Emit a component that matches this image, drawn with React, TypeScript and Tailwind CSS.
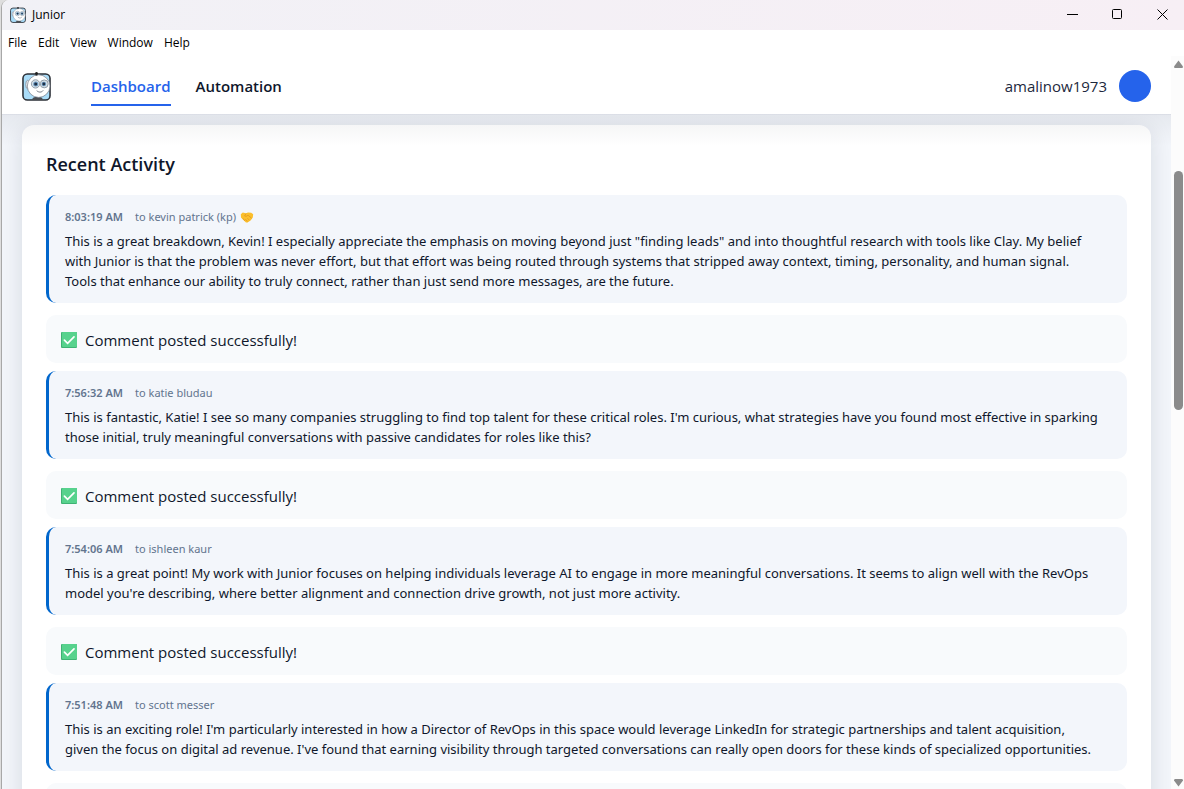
type Activity = {
  time: string;
  recipient: string;
  handshake?: boolean;
  message: string;
};

const menuItems = ["File", "Edit", "View", "Window", "Help"];

const activities: Activity[] = [
  {
    time: "8:03:19 AM",
    recipient: "to kevin patrick (kp)",
    handshake: true,
    message:
      'This is a great breakdown, Kevin! I especially appreciate the emphasis on moving beyond just "finding leads" and into thoughtful research with tools like Clay. My belief with Junior is that the problem was never effort, but that effort was being routed through systems that stripped away context, timing, personality, and human signal. Tools that enhance our ability to truly connect, rather than just send more messages, are the future.',
  },
  {
    time: "7:56:32 AM",
    recipient: "to katie bludau",
    message:
      "This is fantastic, Katie! I see so many companies struggling to find top talent for these critical roles. I'm curious, what strategies have you found most effective in sparking those initial, truly meaningful conversations with passive candidates for roles like this?",
  },
  {
    time: "7:54:06 AM",
    recipient: "to ishleen kaur",
    message:
      "This is a great point! My work with Junior focuses on helping individuals leverage AI to engage in more meaningful conversations. It seems to align well with the RevOps model you're describing, where better alignment and connection drive growth, not just more activity.",
  },
  {
    time: "7:51:48 AM",
    recipient: "to scott messer",
    message:
      "This is an exciting role! I'm particularly interested in how a Director of RevOps in this space would leverage LinkedIn for strategic partnerships and talent acquisition, given the focus on digital ad revenue. I've found that earning visibility through targeted conversations can really open doors for these kinds of specialized opportunities.",
  },
];

function RobotLogo({ className }: { className: string }) {
  return (
    <svg viewBox="0 0 30 30" className={className} aria-hidden="true">
      <rect x="1" y="2" width="28" height="27" rx="4.5" fill="#a9dcf8" stroke="#2b2f36" strokeWidth="1.6" />
      <path d="M10.5 29c0-2.4 2-3.4 5.5-3.4s5.5 1 5.5 3.4z" fill="#4a4d52" />
      <ellipse cx="5.8" cy="13" rx="1.9" ry="4.4" fill="#eef2f5" stroke="#6b7280" strokeWidth="0.7" />
      <circle cx="17.2" cy="14.6" r="11.7" fill="#ffffff" stroke="#6b7280" strokeWidth="0.7" />
      <path d="M15 3.5V1.2" stroke="#222" strokeWidth="1.8" />
      <circle cx="15" cy="1.4" r="1.4" fill="#222" />
      <circle cx="14" cy="12.3" r="4.3" fill="#d5dfe6" stroke="#8794a0" strokeWidth="0.9" />
      <circle cx="23" cy="12.3" r="4.1" fill="#d5dfe6" stroke="#8794a0" strokeWidth="0.9" />
      <circle cx="14.2" cy="12.4" r="2.6" fill="#6d9cc4" />
      <circle cx="22.6" cy="12.4" r="2.4" fill="#6d9cc4" />
      <circle cx="14.2" cy="12.4" r="1.6" fill="#1f2f45" />
      <circle cx="22.6" cy="12.4" r="1.5" fill="#1f2f45" />
      <path d="M15.5 19.6c2 1.7 4.6 1.7 6.2-0.2" fill="none" stroke="#4b5563" strokeWidth="0.8" strokeLinecap="round" />
    </svg>
  );
}

function HandshakeIcon() {
  return (
    <svg viewBox="0 0 14 12" className="h-3 w-3.5" aria-hidden="true">
      <path d="M0.8 3.2 2.8 1.6 6 2.2 8 1.6l3.2 0.2 2 1.4-0.4 3.4-2 2.6-3.2 2.2H6L2.8 8.6 1 6.4z" fill="#fbbf2d" />
      <path d="M6 2.6 4.6 5l1.6 0.4L8 4.2l3.6 3M5 10l-2-2.6M7.4 10.4 5.4 8.2M9.4 9.2 7.4 7.2" fill="none" stroke="#e09420" strokeWidth="0.7" />
    </svg>
  );
}

function CheckIcon() {
  return (
    <svg viewBox="0 0 16 16" className="size-4" aria-hidden="true">
      <rect width="16" height="16" rx="1" fill="#3fb274" />
      <rect x="1" y="0" width="15" height="15" rx="1" fill="#57d28d" />
      <path d="m3.4 8.2 3.2 3.2 6.4-6.6" fill="none" stroke="#fff" strokeWidth="1.7" strokeLinecap="round" />
    </svg>
  );
}

function TitleBar() {
  return (
    <div className="flex h-[30px] shrink-0 items-center justify-between bg-linear-to-r from-[#f1f1f6] to-[#f7eff5] pl-2">
      <div className="flex items-center gap-1.5">
        <RobotLogo className="size-4" />
        <span className="text-xs text-black">Junior</span>
      </div>
      <div className="flex h-full pb-0.5">
        <button type="button" aria-label="Minimize" className="flex w-[45px] items-center justify-center">
          <svg viewBox="0 0 11 11" className="size-[11px]" fill="none" stroke="#000">
            <path d="M0 5.5h11" />
          </svg>
        </button>
        <button type="button" aria-label="Maximize" className="flex w-[45px] items-center justify-center">
          <svg viewBox="0 0 11 11" className="size-[11px]" fill="none" stroke="#000">
            <rect x="0.5" y="0.5" width="9" height="9" rx="1" />
          </svg>
        </button>
        <button type="button" aria-label="Close" className="flex w-11 items-center justify-center">
          <svg viewBox="0 0 11 11" className="size-[11px]" fill="none" stroke="#000">
            <path d="m0.5 0.5 10 10M10.5 0.5l-10 10" />
          </svg>
        </button>
      </div>
    </div>
  );
}

function MenuBar() {
  return (
    <div className="flex h-[26px] shrink-0 items-center gap-[11px] bg-white px-1.5">
      {menuItems.map((item) => (
        <button key={item} type="button" className="text-xs text-black">
          {item}
        </button>
      ))}
    </div>
  );
}

function Header() {
  return (
    <header className="relative z-10 flex h-[59px] shrink-0 items-center justify-between border-b border-[#e8ebf2] bg-white px-5 pt-0.5">
      <div className="flex items-center gap-10">
        <RobotLogo className="size-[29px]" />
        <nav className="flex gap-[25px] text-[15px] leading-6 font-semibold">
          <a href="#dashboard" className="border-b-2 border-[#2563eb] pt-2 pb-1.5 text-[#2563eb]">
            Dashboard
          </a>
          <a href="#automation" className="border-b-2 border-transparent pt-2 pb-1.5 text-slate-900">
            Automation
          </a>
        </nav>
      </div>
      <div className="flex items-center gap-3">
        <span className="text-[15px] text-slate-800">amalinow1973</span>
        <div className="size-8 rounded-full bg-[#2563eb]" />
      </div>
      {/* Shade that the header casts on the scrolled content */}
      <div className="pointer-events-none absolute inset-x-0 top-full h-8 bg-linear-to-b from-slate-900/6 to-transparent" />
    </header>
  );
}

function ActivityEntry({ activity }: { activity: Activity }) {
  return (
    <article className="mb-3 rounded-[10px] border-l-3 border-[#0066cc] bg-[#f3f6fb] py-3 pr-7 pl-4 font-['Noto_Sans','Open_Sans',sans-serif]">
      <div className="mb-1 flex h-5 items-center gap-3 text-[11px] text-slate-500">
        <time className="font-semibold">{activity.time}</time>
        <span className="flex items-center gap-1">
          {activity.recipient}
          {activity.handshake && <HandshakeIcon />}
        </span>
      </div>
      <p className="text-[13px] leading-5 text-slate-900">{activity.message}</p>
    </article>
  );
}

function PostedStatus() {
  return (
    <div className="mb-2 flex h-12 items-center gap-2 rounded-[10px] bg-slate-50 px-[15px] pt-0.5 text-[15px] leading-5 text-slate-900">
      <CheckIcon />
      Comment posted successfully!
    </div>
  );
}

function ScrollBar() {
  return (
    <div className="flex w-[13px] shrink-0 flex-col items-end bg-[#fcfcfc] pt-1 pr-px pb-0.5">
      <svg viewBox="0 0 9 8" className="h-2 w-[9px]" fill="#8b8b8b" aria-hidden="true">
        <path d="M4.5 0.5 9 6.5Q9 8 8 8H1Q0 8 0 6.5z" />
      </svg>
      <div className="mt-[103px] h-[239px] w-[9px] rounded-full bg-[#8b8b8b]" />
      <svg viewBox="0 0 9 8" className="mt-auto h-2 w-[9px]" fill="#8b8b8b" aria-hidden="true">
        <path d="M4.5 7.5 9 1.5Q9 0 8 0H1Q0 0 0 1.5z" />
      </svg>
    </div>
  );
}

export default function App() {
  return (
    <div className="h-screen bg-[#dedede] pl-px">
      <div className="flex h-full flex-col overflow-hidden rounded-tl-lg border-l border-[#a8a8a8] bg-white font-['Open_Sans','Noto_Sans',sans-serif]">
        <TitleBar />
        <MenuBar />
        <div className="flex min-h-0 flex-1">
          <div className="flex min-w-0 flex-1 flex-col">
            <Header />
            <main className="min-h-0 flex-1 overflow-hidden bg-[#f3f6fb] px-5 pt-2.5">
              <section className="rounded-xl bg-white p-6 shadow-[0_4px_24px_rgba(15,23,42,0.12)]">
                <h2 className="mb-4 text-lg leading-[30px] font-semibold text-slate-900">Recent Activity</h2>
                {activities.map((activity) => (
                  <div key={activity.time}>
                    <ActivityEntry activity={activity} />
                    <PostedStatus />
                  </div>
                ))}
              </section>
            </main>
          </div>
          <ScrollBar />
        </div>
      </div>
    </div>
  );
}
